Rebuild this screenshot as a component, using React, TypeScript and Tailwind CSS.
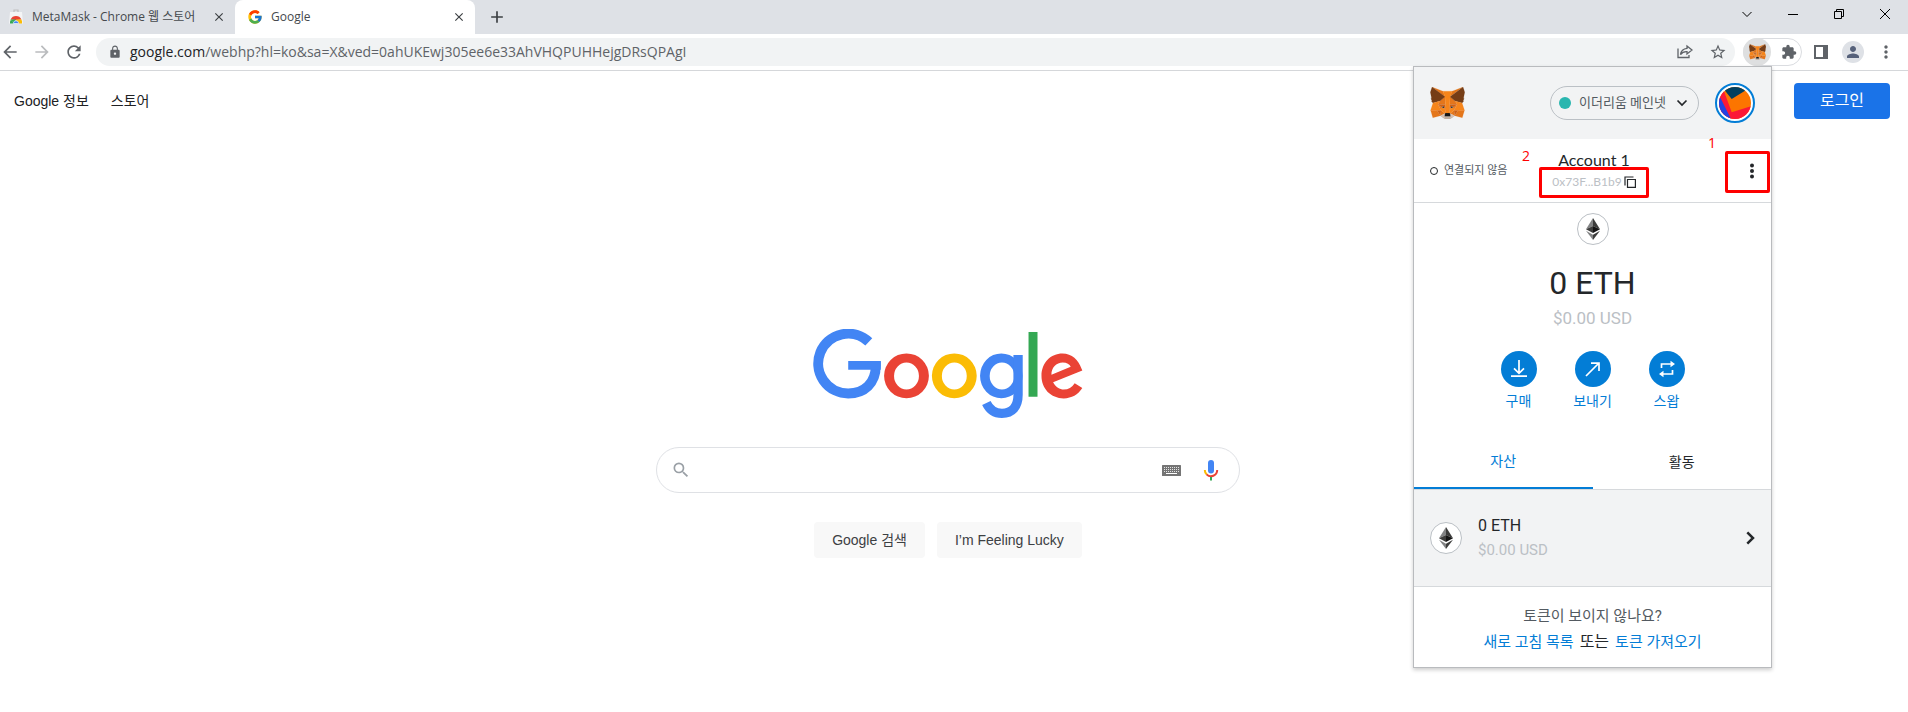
import React from "react";
import {
  MdArrowBack,
  MdArrowForward,
  MdRefresh,
  MdLock,
  MdStarBorder,
  MdExtension,
  MdPerson,
  MdMoreVert,
  MdSearch,
  MdAdd,
  MdClose,
} from "react-icons/md";
import { FcGoogle } from "react-icons/fc";

const FOX: [string, string][] = [
  ["#E2761B", "274.1,35.5 174.6,109.4 193,65.8"],
  ["#E4761B", "44.4,35.5 143.1,110.1 125.6,65.8"],
  ["#E4761B", "238.3,206.8 211.8,247.4 268.5,263 284.8,207.7"],
  ["#E4761B", "33.9,207.7 50.1,263 106.8,247.4 80.3,206.8"],
  ["#E4761B", "103.6,138.2 87.8,162.1 144.1,164.6 142.1,104.1"],
  ["#E4761B", "214.9,138.2 175.9,103.4 174.6,164.6 230.8,162.1"],
  ["#E4761B", "106.8,247.4 140.6,230.9 111.4,208.1"],
  ["#E4761B", "177.9,230.9 211.8,247.4 207.1,208.1"],
  ["#D7C1B3", "211.8,247.4 177.9,230.9 180.6,253 180.3,262.3"],
  ["#D7C1B3", "106.8,247.4 138.3,262.3 138.1,253 140.6,230.9"],
  ["#233447", "138.8,193.5 110.6,185.2 130.5,176.1"],
  ["#233447", "179.7,193.5 188,176.1 208,185.2"],
  ["#CD6116", "106.8,247.4 111.6,206.8 80.3,207.7"],
  ["#CD6116", "207,206.8 211.8,247.4 238.3,207.7"],
  ["#CD6116", "230.8,162.1 174.6,164.6 179.8,193.5 188.1,176.1 208.1,185.2"],
  ["#CD6116", "110.6,185.2 130.6,176.1 138.8,193.5 144.1,164.6 87.8,162.1"],
  ["#E4751F", "87.8,162.1 111.4,208.1 110.6,185.2"],
  ["#E4751F", "208.1,185.2 207.1,208.1 230.8,162.1"],
  ["#E4751F", "144.1,164.6 138.8,193.5 145.4,227.6 146.9,182.7"],
  ["#E4751F", "174.6,164.6 171.9,182.6 173.1,227.6 179.8,193.5"],
  ["#F6851B", "179.8,193.5 173.1,227.6 177.9,230.9 207.1,208.1 208.1,185.2"],
  ["#F6851B", "110.6,185.2 111.4,208.1 140.6,230.9 145.4,227.6 138.8,193.5"],
  ["#C0AD9E", "180.3,262.3 180.6,253 178.1,250.8 140.4,250.8 138.1,253 138.3,262.3 106.8,247.4 117.8,256.4 140.1,271.9 178.4,271.9 200.8,256.4 211.8,247.4"],
  ["#161616", "177.9,230.9 173.1,227.6 145.4,227.6 140.6,230.9 138.1,253 140.4,250.8 178.1,250.8 180.6,253"],
  ["#763D16", "278.3,114.2 286.8,73.4 274.1,35.5 177.9,106.9 214.9,138.2 267.2,153.5 278.8,140 273.8,136.4 281.8,129.1 275.6,124.3 283.6,118.2"],
  ["#763D16", "31.8,73.4 40.3,114.2 34.9,118.2 42.9,124.3 36.8,129.1 44.8,136.4 39.8,140 51.3,153.5 103.6,138.2 140.6,106.9 44.4,35.5"],
  ["#F6851B", "267.2,153.5 214.9,138.2 230.8,162.1 207.1,208.1 238.3,207.7 284.8,207.7"],
  ["#F6851B", "103.6,138.2 51.3,153.5 33.9,207.7 80.3,207.7 111.4,208.1 87.8,162.1"],
  ["#F6851B", "174.6,164.6 177.9,106.9 193.1,65.8 125.6,65.8 140.6,106.9 144.1,164.6 145.3,182.8 145.4,227.6 173.1,227.6 173.3,182.8"],
];

function Fox({ className }: { className: string }) {
  return (
    <svg viewBox="31 35 256 237" className={className} aria-hidden="true">
      {FOX.map(([fill, points]) => (
        <polygon key={points} fill={fill} stroke={fill} strokeWidth="1" points={points} />
      ))}
    </svg>
  );
}

function WebStoreIcon() {
  return (
    <svg viewBox="0 0 16 16" className="size-4 shrink-0" aria-hidden="true">
      <path d="M6 3V1H10V3" fill="none" stroke="#c0c0c0" strokeWidth="1.200" />
      <path d="M2 3h12l1 11.500H1z" fill="#f4f5f6" />
      <path d="M2 14.500a6 6 0 0 1 .900-4L6 14.500z" fill="#34a853" />
      <path d="M2.600 10.500a6 6 0 0 1 10.800 0L8 11z" fill="#ea4335" />
      <path d="M2.600 10.500L6 14.500 8 10.500z" fill="#34a853" />
      <path d="M8 10.500h5.400a6 6 0 0 1 .6 4H9z" fill="#fbbc05" />
      <path d="M5.300 14.500a2.700 2.700 0 1 1 5.400 0z" fill="#4285f4" stroke="#fff" strokeWidth=".6" />
    </svg>
  );
}

function GoogleLogo() {
  return (
    <svg viewBox="36 27 811 268" className="h-[89px] w-[270px]" role="img" aria-label="Google">
      <path
        d="M203 66A90 90 0 1 0 141 221C190 221 224 190 224 137V124"
        fill="none"
        stroke="#4285f4"
        strokeWidth="30"
      />
      <path d="M141 123H239V149.500H141Z" fill="#4285f4" />
      <path
        fillRule="evenodd"
        fill="#ea4335"
        d="M249 168a67.500 67.500 0 1 0 135 0a67.500 67.500 0 1 0 -135 0ZM279 168.500a37.500 40.500 0 1 0 75 0a37.500 40.500 0 1 0 -75 0Z"
      />
      <path
        fillRule="evenodd"
        fill="#fbbc05"
        d="M393 168a67.500 67.500 0 1 0 135 0a67.500 67.500 0 1 0 -135 0ZM423 168.500a37.500 40.500 0 1 0 75 0a37.500 40.500 0 1 0 -75 0Z"
      />
      <path
        fillRule="evenodd"
        fill="#4285f4"
        d="M538 168a64 67.500 0 1 0 128 0a64 67.500 0 1 0 -128 0ZM567 168.500a37 40.500 0 1 0 74 0a37 40.500 0 1 0 -74 0Z"
      />
      <path
        d="M652.500 105V225C652.500 262 634 281 604 281C581 281 566 269 557 250"
        fill="none"
        stroke="#4285f4"
        strokeWidth="28"
      />
      <rect x="684" y="36" width="27" height="195" fill="#34a853" />
      <path
        fillRule="evenodd"
        fill="#ea4335"
        d="M846 152L758 187C766 202 778 209 790 209C804 209 815 203 823 190L846 205C833 225 814 236 790 236C751 236 723 207 723 168C723 129 751 101 786 101C815 101 834 121 843 145ZM753 165L811 141C808 133 799 128 787 128C768 128 752 144 753 165Z"
      />
    </svg>
  );
}

function KeyboardIcon() {
  const cols = [2, 4, 6, 8, 10, 12, 14, 16];
  return (
    <svg viewBox="0 0 19 11" className="h-[11px] w-[19px]" aria-hidden="true">
      <rect width="19" height="11" rx=".5" fill="#757575" />
      {[2, 4, 6].map((y) =>
        cols.map((x) => <rect key={`${y}-${x}`} x={x} y={y} width="1" height="1" fill="#e4e4e4" />)
      )}
      <rect x="4" y="8" width="11" height="1" fill="#fff" />
    </svg>
  );
}

function MicIcon() {
  return (
    <svg viewBox="0 0 16 21" className="h-[21px] w-4" aria-hidden="true">
      <rect x="5" y="0" width="6" height="13.500" rx="3" fill="#4285f4" />
      <path d="M1.800 10a6.200 6.200 0 0 0 2 4.600" fill="none" stroke="#fbbc05" strokeWidth="2" />
      <path d="M3.600 14.400a6.200 6.200 0 0 0 10.600-4.400" fill="none" stroke="#ea4335" strokeWidth="2" />
      <rect x="7" y="17" width="2" height="3.500" fill="#34a853" />
    </svg>
  );
}

function EthBadge() {
  return (
    <span className="flex size-8 shrink-0 items-center justify-center rounded-full border border-[#bbc0c5] bg-white">
      <svg viewBox="0 0 14 22" className="h-[22px] w-3.5" aria-hidden="true">
        <path d="M7 0L0 11.200L7 8Z" fill="#828384" />
        <path d="M7 0L14 11.200L7 8Z" fill="#3c3c3b" />
        <path d="M0 11.200L7 8V15Z" fill="#3c3c3b" />
        <path d="M14 11.200L7 8V15Z" fill="#141414" />
        <path d="M0 12.800L7 16.800V22Z" fill="#828384" />
        <path d="M14 12.800L7 16.800V22Z" fill="#3c3c3b" />
      </svg>
    </span>
  );
}

function Jazzicon() {
  return (
    <svg viewBox="0 0 32 32" className="size-8 shrink-0" aria-hidden="true">
      <defs>
        <clipPath id="avatar-clip">
          <circle cx="16" cy="16" r="16" />
        </clipPath>
      </defs>
      <g clipPath="url(#avatar-clip)">
        <rect width="32" height="32" fill="#fc7500" />
        <path d="M0 0H3.500L12.700 25.300L32 19.300V32H0Z" fill="#fb1837" />
        <path d="M0 10L1.500 11L12 32H0Z" fill="#2343e1" />
        <path d="M3 0H28V2.500L12.700 12Z" fill="#033f5e" />
      </g>
    </svg>
  );
}

function ActionIcon({ kind }: { kind: string }) {
  return (
    <svg viewBox="0 0 18 18" className="size-[18px]" fill="none" stroke="#fff" strokeWidth="1.700" aria-hidden="true">
      {kind === "buy" && <path d="M9 0V13M4 8.300L9 13.300L14 8.300M1 16.200H17" />}
      {kind === "send" && <path d="M2 16L15 3M7 3.200H15V11" />}
      {kind === "swap" && (
        <>
          <path d="M3.500 8V4H13M14.500 10V14H5" />
          <path d="M12.500 .8L17 4L12.500 7.200ZM5.500 10.800L1 14L5.500 17.200Z" fill="#fff" stroke="none" />
        </>
      )}
    </svg>
  );
}

const actions = [
  { kind: "buy", label: "구매" },
  { kind: "send", label: "보내기" },
  { kind: "swap", label: "스왑" },
];

function TabStrip() {
  return (
    <div className="flex h-[34px] bg-[#dee1e6] font-['Open_Sans','Noto_Sans_CJK_KR',sans-serif] text-xs text-[#45494d]">
      <div className="flex w-[235px] items-center pr-2 pl-2">
        <WebStoreIcon />
        <span className="ml-2 flex-1 whitespace-nowrap">MetaMask - Chrome 웹 스토어</span>
        <button aria-label="탭 닫기" className="p-px">
          <MdClose className="size-3.5 text-[#3c4043]" />
        </button>
      </div>
      <div className="flex w-60 items-center rounded-t-lg bg-white pr-2 pl-3">
        <FcGoogle className="size-4 shrink-0" />
        <span className="ml-2 flex-1">Google</span>
        <button aria-label="탭 닫기" className="p-px">
          <MdClose className="size-3.5 text-[#3c4043]" />
        </button>
      </div>
      <button aria-label="새 탭" className="px-3">
        <MdAdd className="size-5 text-[#3c4043]" />
      </button>
      <div className="ml-auto flex items-center pb-1.5">
        {[
          ["탭 검색", "M1.500 4L6 8.500L10.500 4"],
          ["최소화", "M1 6.500H11"],
          ["이전 크기로", "M1.500 3.500H8.500V10.500H1.500ZM3.500 3.500V1.500H10.500V8.500H8.500"],
          ["닫기", "M1 1L11 11M11 1L1 11"],
        ].map(([label, d]) => (
          <button key={label} aria-label={label} className="flex w-[46px] justify-center">
            <svg viewBox="0 0 12 12" className="size-3" fill="none" stroke="#000" aria-hidden="true">
              <path d={d} />
            </svg>
          </button>
        ))}
      </div>
    </div>
  );
}

function Toolbar() {
  return (
    <div className="flex h-[37px] items-center border-b border-[#d5d7da] bg-white pr-3 text-[#5f6368]">
      <button aria-label="뒤로">
        <MdArrowBack className="size-5" />
      </button>
      <button aria-label="앞으로" className="ml-3">
        <MdArrowForward className="size-5 text-[#babcbe]" />
      </button>
      <button aria-label="새로고침" className="ml-3">
        <MdRefresh className="size-5" />
      </button>
      <div className="relative ml-3 flex h-7 flex-1 items-center rounded-full bg-[#f1f3f4] px-3">
        <MdLock className="size-3.5 shrink-0" />
        <input
          type="text"
          aria-label="주소창"
          readOnly
          value=""
          className="absolute inset-0 rounded-full bg-transparent"
        />
        <p className="ml-2 flex-1 font-['Open_Sans','Noto_Sans_CJK_KR',sans-serif] text-sm whitespace-nowrap">
          <span className="text-[#202124]">google.com</span>
          /webhp?hl=ko&amp;sa=X&amp;ved=0ahUKEwj305ee6e33AhVHQPUHHejgDRsQPAgI
        </p>
        <button aria-label="공유" className="relative">
          <svg viewBox="0 0 16 16" className="size-4" fill="none" stroke="#5f6368" strokeWidth="1.300" aria-hidden="true">
            <path d="M1 4.500V13.500H12V11" />
            <path d="M10 2L15 6L10 10V7.700C7 7.500 5 8.500 3.500 10.500C4 7 6 4.700 10 4.300Z" />
          </svg>
        </button>
        <button aria-label="북마크" className="relative mx-4 -mr-1">
          <MdStarBorder className="size-[18px]" />
        </button>
      </div>
      <div className="ml-2 flex h-7 w-[59px] items-center rounded-full border border-[#dadce0]">
        <button aria-label="MetaMask" className="-ml-px flex size-7 items-center justify-center rounded-full bg-[#dedfe0]">
          <Fox className="h-4 w-[17px]" />
        </button>
        <button aria-label="확장 프로그램" className="ml-2.5">
          <MdExtension className="size-4" />
        </button>
      </div>
      <button aria-label="측면 패널" className="ml-3">
        <svg viewBox="0 0 14 14" className="size-3.5" aria-hidden="true">
          <path fillRule="evenodd" fill="#5f6368" d="M0 0H14V14H0ZM2 2V12H9V2Z" />
        </svg>
      </button>
      <button aria-label="프로필" className="ml-3.5 flex size-[22px] items-center justify-center rounded-full bg-[#dee1e6]">
        <MdPerson className="size-[18px] text-[#56617a]" />
      </button>
      <button aria-label="메뉴" className="ml-3">
        <MdMoreVert className="size-5" />
      </button>
    </div>
  );
}

function Wallet() {
  return (
    <section
      aria-label="MetaMask"
      className="absolute top-[66px] right-[136px] w-[359px] border border-[#b9bbbe] bg-white font-[Roboto,'Noto_Sans_CJK_KR',sans-serif] text-sm text-[#24272a] shadow-[0_2px_4px_rgba(0,0,0,0.2)]"
    >
      <header className="flex h-[72px] items-center bg-[#f2f3f4] px-4">
        <Fox className="h-8 w-[35px]" />
        <button className="ml-auto flex h-[34px] w-[149px] items-center rounded-full border border-[#bbc0c5] pr-2.5 pl-2 text-left text-[13px] text-[#535a61]">
          <span className="mr-2 size-3 rounded-full bg-[#29b6af]" />
          <span className="flex-1 whitespace-nowrap">이더리움 메인넷</span>
          <svg viewBox="0 0 12 8" className="h-2 w-3" fill="none" stroke="#24272a" strokeWidth="1.700" aria-hidden="true">
            <path d="M1.500 1.500L6 6L10.500 1.500" />
          </svg>
        </button>
        <button
          aria-label="내 계정"
          className="ml-4 flex size-10 items-center justify-center rounded-full border-2 border-[#037dd6] bg-white"
        >
          <Jazzicon />
        </button>
      </header>

      <div className="relative flex h-16 items-center border-b border-[#d6d9dc] pl-4">
        <span className="size-2 rounded-full border border-[#24272a]" />
        <span className="ml-1.5 w-16 text-[11px] whitespace-nowrap text-[#535a61]">연결되지 않음</span>
        <div className="ml-11 flex w-[84px] flex-col items-center font-[Lato,sans-serif]">
          <h2 className="text-base leading-[22px]">Account 1</h2>
          <button className="flex items-center gap-0.5 text-xs leading-[22px] text-[#bbc0c5]">
            0x73F...B1b9
            <svg viewBox="0 0 12 12" className="size-3" fill="none" stroke="#24272a" strokeWidth="1.200" aria-hidden="true">
              <path d="M3.500 3.500H11.400V11.400H3.500ZM1 9.500V1H9.500" />
            </svg>
          </button>
        </div>
        <button aria-label="계정 옵션" className="mr-[17px] ml-auto">
          <svg viewBox="0 0 4 16" className="h-4 w-1" fill="#24272a" aria-hidden="true">
            <circle cx="2" cy="2.500" r="2" />
            <circle cx="2" cy="8" r="2" />
            <circle cx="2" cy="13.500" r="2" />
          </svg>
        </button>
        <span className="absolute top-3 left-[311px] h-[42px] w-[45px] rounded-xs border-3 border-[#fe0000]" />
        <span className="absolute top-7 left-[125px] h-[31px] w-[110px] rounded-xs border-3 border-[#fe0000]" />
        <span className="absolute -top-1.5 left-[294px] font-['Open_Sans',sans-serif] text-sm text-[#fe0000]">1</span>
        <span className="absolute top-[7px] left-[108px] font-['Open_Sans',sans-serif] text-sm text-[#fe0000]">2</span>
      </div>

      <div className="flex flex-col items-center pt-2.5">
        <EthBadge />
        <p className="mt-4 text-[32px] leading-[45px]">0 ETH</p>
        <p className="text-[17px] leading-6 text-[#bbc0c5]">$0.00 USD</p>
        <div className="mt-[21px] flex">
          {actions.map((a) => (
            <button key={a.kind} className="flex w-[74px] flex-col items-center text-[#037dd6]">
              <span className="flex size-9 items-center justify-center rounded-full bg-[#037dd6]">
                <ActionIcon kind={a.kind} />
              </span>
              <span className="mt-1 leading-5">{a.label}</span>
            </button>
          ))}
        </div>
      </div>

      <div role="tablist" className="mt-6 flex h-[55px] border-b border-[#d6d9dc] text-center">
        <button role="tab" aria-selected="true" className="flex-1 border-b-2 border-[#037dd6] text-[#037dd6]">
          자산
        </button>
        <button role="tab" aria-selected="false" className="flex-1">
          활동
        </button>
      </div>

      <button className="flex h-[97px] w-full items-center border-b border-[#d6d9dc] bg-[#f2f3f4] px-4 text-left">
        <EthBadge />
        <span className="ml-4 flex flex-1 flex-col">
          <span className="text-base leading-6">0 ETH</span>
          <span className="text-[15px] leading-6 text-[#bbc0c5]">$0.00 USD</span>
        </span>
        <svg viewBox="0 0 9 14" className="h-3.5 w-[9px]" fill="none" stroke="#24272a" strokeWidth="2.500" aria-hidden="true">
          <path d="M1.300 1.300L7 7L1.300 12.700" />
        </svg>
      </button>

      <div className="flex flex-col items-center pt-4 pb-3 text-[15px] leading-[26px]">
        <p className="text-[#535a61]">토큰이 보이지 않나요?</p>
        <p className="flex gap-1.5">
          <a href="#refresh" className="text-[#037dd6]">새로 고침 목록</a>
          <span className="text-base leading-[26px]">또는</span>
          <a href="#import" className="text-[#037dd6]">토큰 가져오기</a>
        </p>
      </div>
    </section>
  );
}

export default function App() {
  return (
    <div className="relative min-h-screen bg-white font-['Liberation_Sans','Noto_Sans_CJK_KR',sans-serif]">
      <TabStrip />
      <Toolbar />
      <nav className="flex h-[60px] items-center gap-[22px] pr-[18px] pl-3.5 text-sm text-[#202124]">
        <a href="#about">Google 정보</a>
        <a href="#store">스토어</a>
        <a
          href="#login"
          className="ml-auto flex h-9 w-24 items-center justify-center rounded bg-[#1a73e8] text-base text-white"
        >
          로그인
        </a>
      </nav>
      <main className="flex flex-col items-center pt-[198px] pr-3">
        <GoogleLogo />
        <form className="mt-[29px] flex w-full max-w-[584px] flex-col items-center" onSubmit={(e) => e.preventDefault()}>
          <div className="flex h-[46px] w-full items-center rounded-full border border-[#dfe1e5] pr-5 pl-3.5">
            <MdSearch className="size-5 text-[#9aa0a6]" />
            <input type="text" aria-label="검색" className="mx-3 h-8 flex-1 outline-none" />
            <button type="button" aria-label="입력 도구">
              <KeyboardIcon />
            </button>
            <button type="button" aria-label="음성으로 검색" className="ml-[22px]">
              <MicIcon />
            </button>
          </div>
          <div className="mt-[29px] flex gap-3 text-sm text-[#3c4043]">
            <button className="h-9 rounded bg-[#f8f8f8] px-[18px]">Google 검색</button>
            <button className="h-9 rounded bg-[#f8f8f8] px-[18px]">I’m Feeling Lucky</button>
          </div>
        </form>
      </main>
      <Wallet />
    </div>
  );
}
